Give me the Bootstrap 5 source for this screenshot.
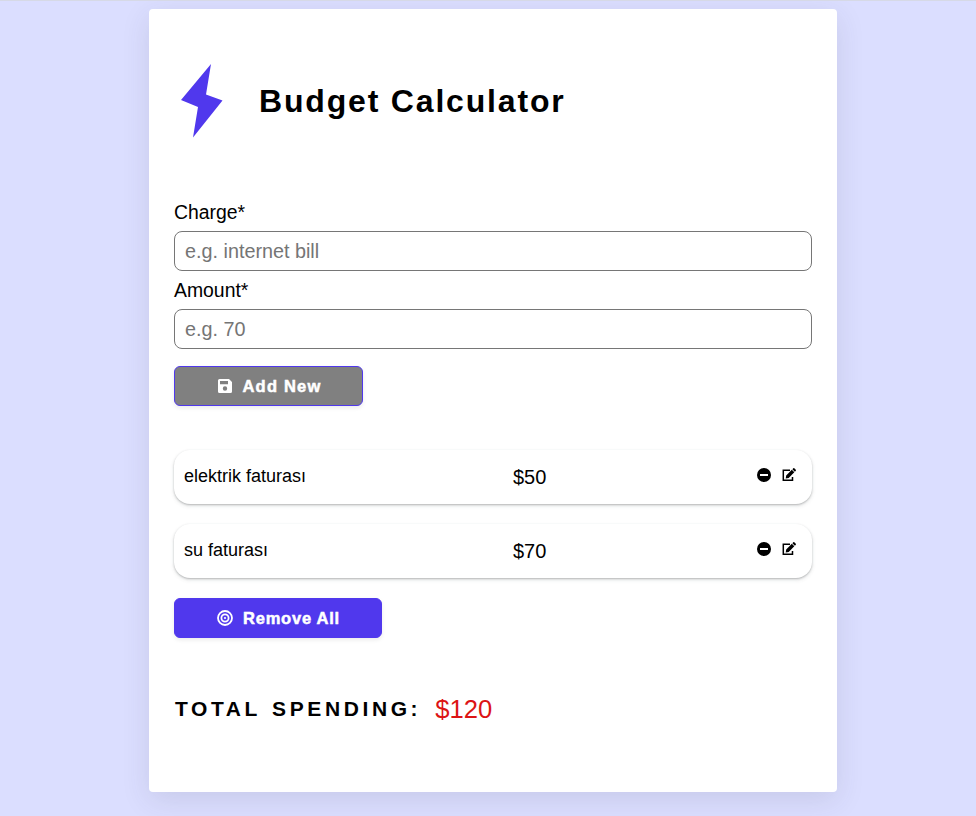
<!DOCTYPE html>
<html lang="en">
<head>
<meta charset="utf-8">
<meta name="viewport" content="width=device-width, initial-scale=1">
<title>Budget Calculator</title>
<link href="https://cdn.jsdelivr.net/npm/bootstrap@5.3.0/dist/css/bootstrap.min.css" rel="stylesheet">
<style>
body{background:#dbdeff;color:#000;font-family:"Liberation Sans",Arial,sans-serif;border-top:1px solid #d6d9e6;min-height:816px}
.panel{width:688px;height:783px;margin:8px 0 0 149px;padding:0 25px;border-radius:4px;box-shadow:rgba(60,60,70,.12) 0 8px 29px 0}
.brand{height:183px}
.bolt{width:42px;height:74px;margin-left:7px}
.brand h1{font-size:32px;font-weight:700;letter-spacing:1.82px;line-height:38px;margin-left:36px}
.entry-form{padding-top:9px}
.form-label{font-size:19.4px;line-height:22px;margin:0}
.form-control,.form-control:focus{height:40px;font-size:19.8px;line-height:24px;padding:7px 10px;border:1px solid #767676;border-radius:8px;background:#fff}
.form-control::placeholder{color:#757575}
.act{height:40px;border-radius:6px;border:1px solid #5038ed;background:#5038ed;color:#fff;font:700 16.5px/20px "Liberation Sans",Arial,sans-serif;letter-spacing:.75px;-webkit-text-stroke:.5px #fff;box-shadow:0 2px 4px rgba(0,0,0,.08)}
.act svg{width:18px;height:18px;margin-right:9px}
.add{width:189px;background:#808080;margin-top:17px;letter-spacing:1.2px}
.remove{width:208px;margin-top:20px}
.list{margin-top:44px;row-gap:20px}
.entry{height:54px;border-radius:16px;padding:0 15px 2px 10px;box-shadow:rgba(60,64,67,.3) 0 1px 2px 0,rgba(60,64,67,.12) 0 2px 4px 0}
.entry .label{font-size:18px;width:329px}
.entry .cost{font-size:20px;padding-top:1px}
.tools{gap:9px;padding-bottom:2px}
.tools svg{width:16px;height:16px}
.totals{margin-top:52px}
.total{font-size:21px;letter-spacing:3.6px;word-spacing:2px;padding-left:1px}
.sum{font-size:25.6px;color:#dc1414;margin-left:14px}
</style>
<script src="https://cdn.jsdelivr.net/npm/bootstrap@5.3.0/dist/js/bootstrap.bundle.min.js"></script>
</head>
<body>
<main class="panel bg-white">
  <header class="brand d-flex align-items-center">
    <svg class="bolt" viewBox="0 0 42 74"><path fill="#5038ed" d="M30 0 25 30.500 41.500 36.500 12 73.500 17 43 0 36Z"/></svg>
    <h1 class="mb-0">Budget Calculator</h1>
  </header>
  <form class="entry-form">
    <label class="form-label d-block" for="charge">Charge*</label>
    <input class="form-control mt-2" id="charge" placeholder="e.g. internet bill">
    <label class="form-label d-block mt-2" for="amount">Amount*</label>
    <input class="form-control mt-2" id="amount" placeholder="e.g. 70">
    <button type="button" class="act add d-flex align-items-center justify-content-center"><svg viewBox="0 0 18 18" stroke="none"><path fill="#fff" fill-rule="evenodd" d="M3.500 2H13l3 3v9.500a1.500 1.500 0 0 1-1.500 1.500h-11A1.500 1.500 0 0 1 2 14.500v-11A1.500 1.500 0 0 1 3.500 2ZM4 4v3.200h8V4Zm5 5.300a2.200 2.200 0 1 0 0 4.400 2.200 2.200 0 0 0 0-4.400Z"/></svg>Add New</button>
  </form>
  <section class="list d-grid">
    <div class="entry d-flex align-items-center"><span class="label">elektrik faturası</span><span class="cost">$50</span>
      <span class="ms-auto d-flex tools"><svg viewBox="0 0 16 16"><circle cx="8" cy="8" r="7"/><path fill="#fff" d="M4 7h8v2H4z"/></svg><svg viewBox="0 0 16 16"><use href="#pencil"/></svg></span></div>
    <div class="entry d-flex align-items-center"><span class="label">su faturası</span><span class="cost">$70</span>
      <span class="ms-auto d-flex tools"><svg viewBox="0 0 16 16"><circle cx="8" cy="8" r="7"/><path fill="#fff" d="M4 7h8v2H4z"/></svg><svg viewBox="0 0 16 16"><g id="pencil"><path fill="none" stroke="#000" stroke-width="1.500" d="M9 3.300H2.300v10h9.200V10"/><path d="m5.200 8.400 5.600-5.600 2.500 2.500-5.600 5.600-3 .5ZM11.400 2.200l.9-.9q.5-.4 1 0l1.500 1.500q.4.500 0 1l-.9.900Z"/></g></svg></span></div>
  </section>
  <button type="button" class="act remove d-flex align-items-center justify-content-center"><svg viewBox="0 0 18 18" fill="none" stroke="#fff" stroke-width="1.800"><circle cx="9" cy="9" r="7"/><circle cx="9" cy="9" r="3.600"/><circle cx="9" cy="9" r="1.100" fill="#fff" stroke="none"/></svg>Remove All</button>
  <footer class="totals d-flex align-items-center"><span class="total fw-bold">TOTAL SPENDING:</span><span class="sum">$120</span></footer>
</main>
</body>
</html>
